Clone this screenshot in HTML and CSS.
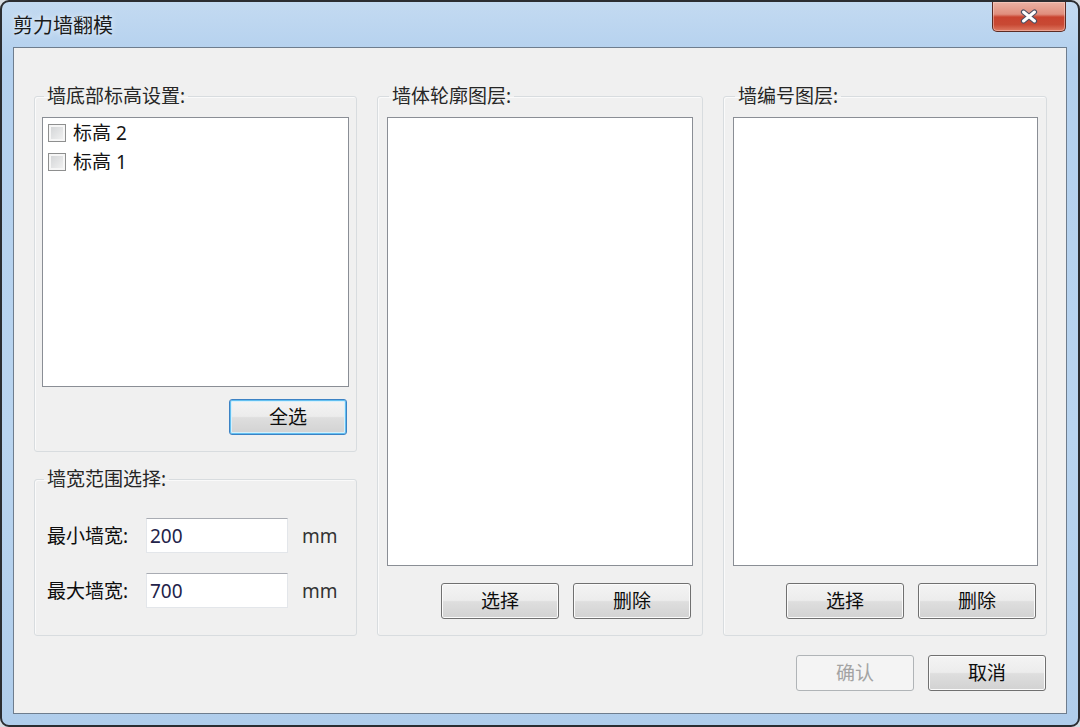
FILE: index.html
```html
<!DOCTYPE html>
<html lang="zh-CN">
<head>
    <meta charset="UTF-8">
    <title>剪力墙翻模</title>
    <link rel="stylesheet" href="styles.css">
</head>
<body>
    <div class="window">
        <div class="titlebar">
            <span class="title">剪力墙翻模</span>
            <button class="close-btn" aria-label="关闭">
                <svg width="18" height="15" viewBox="0 0 18 15">
                    <path d="M3.5 3 L14.5 12 M14.5 3 L3.5 12" stroke="#4b4f63" stroke-width="5.2" stroke-linecap="round" fill="none"/>
                    <path d="M3.5 3 L14.5 12 M14.5 3 L3.5 12" stroke="#ffffff" stroke-width="3" stroke-linecap="round" fill="none"/>
                </svg>
            </button>
        </div>

        <div class="client">
            <div class="panels">
                <div class="col-left">
                    <fieldset class="group group-levels">
                        <legend>墙底部标高设置:</legend>
                        <div class="listbox list-levels">
                            <label class="check-item"><span class="checkbox"></span>标高 2</label>
                            <label class="check-item"><span class="checkbox"></span>标高 1</label>
                        </div>
                        <div class="btn-row">
                            <button class="btn btn-focus">全选</button>
                        </div>
                    </fieldset>

                    <fieldset class="group group-width">
                        <legend>墙宽范围选择:</legend>
                        <div class="field-row">
                            <span class="field-label">最小墙宽:</span>
                            <input class="textbox" type="text" value="200">
                            <span class="unit">mm</span>
                        </div>
                        <div class="field-row">
                            <span class="field-label">最大墙宽:</span>
                            <input class="textbox" type="text" value="700">
                            <span class="unit">mm</span>
                        </div>
                    </fieldset>
                </div>

                <fieldset class="group group-layer group-outline">
                    <legend>墙体轮廓图层:</legend>
                    <div class="listbox list-layer"></div>
                    <div class="btn-row">
                        <button class="btn">选择</button>
                        <button class="btn">删除</button>
                    </div>
                </fieldset>

                <fieldset class="group group-layer group-number">
                    <legend>墙编号图层:</legend>
                    <div class="listbox list-layer"></div>
                    <div class="btn-row">
                        <button class="btn">选择</button>
                        <button class="btn">删除</button>
                    </div>
                </fieldset>
            </div>

            <div class="footer">
                <button class="btn" disabled>确认</button>
                <button class="btn">取消</button>
            </div>
        </div>
    </div>
</body>
</html>
```

FILE: styles.css
```css
:root {
    --frame-blue: #b7d3ee;
    --client-bg: #f0f0f0;
    --text: #141414;
    --ui-font: "Noto Sans", "Noto Sans CJK SC", sans-serif;
}

* {
    margin: 0;
    padding: 0;
    box-sizing: border-box;
}

body {
    width: 1080px;
    height: 727px;
    overflow: hidden;
    background: #d8dde3;
    font-family: var(--ui-font);
    font-size: 19px;
    color: var(--text);
}

.window {
    width: 1080px;
    height: 727px;
    border: 2px solid #2b2d31;
    border-radius: 9px;
    background: linear-gradient(to bottom, #c3daf1, #b3d0ee 8%, #b9d4ef 60%, #b0cdeb);
    display: flex;
    flex-direction: column;
    overflow: hidden;
}

/* title bar */

.titlebar {
    height: 45px;
    flex: none;
    display: flex;
    justify-content: space-between;
    align-items: flex-start;
    padding: 0 12px 0 11px;
}

.title {
    margin-top: 13px;
    font-size: 20px;
    line-height: 22px;
    color: #1a1a1a;
    text-shadow: 0 0 6px rgba(255, 255, 255, 0.9);
}

.close-btn {
    width: 74px;
    height: 30px;
    border: 1px solid #5c2b24;
    border-top: none;
    border-radius: 0 0 5px 5px;
    background: linear-gradient(to bottom, #ebb2a4 0%, #e08e7d 42%, #c9432f 52%, #c84934 78%, #de7a63 100%);
    box-shadow: inset 0 0 0 1px rgba(255, 220, 210, 0.45);
    display: flex;
    align-items: center;
    justify-content: center;
}

/* client area */

.client {
    height: 667px;
    flex: none;
    margin: 0 11px;
    border: 1px solid #6e7d8e;
    background: var(--client-bg);
    padding: 38px 19px 0 20px;
    display: flex;
    flex-direction: column;
}

.panels {
    height: 550px;
    display: flex;
    gap: 20px;
}

.col-left {
    width: 323px;
    display: flex;
    flex-direction: column;
    gap: 17px;
}

.group {
    border: 1px solid #d8dcdf;
    border-radius: 3px;
    box-shadow: inset 1px 1px 0 #fafafa;
    padding: 11px 7px 0 7px;
    min-width: 0;
}

.group legend {
    margin-left: 2px;
    padding: 0 3px;
    line-height: 20px;
    color: #262626;
}

.group-levels {
    height: 366px;
    flex: none;
}

.group-width {
    flex: 1;
    padding: 29px 12px 0 7px;
}

.group-outline {
    width: 326px;
    padding: 11px 9px 0 9px;
}

.group-number {
    flex: 1;
    padding: 11px 8px 0 9px;
}

.listbox {
    background: #ffffff;
    border: 1px solid #8a8e95;
}

.list-levels {
    height: 270px;
    padding: 0 5px;
}

.list-layer {
    height: 449px;
}

.check-item {
    height: 29px;
    display: flex;
    align-items: center;
    gap: 7px;
    line-height: 20px;
}

.checkbox {
    width: 18px;
    height: 18px;
    border: 1px solid #8e8f8f;
    background: linear-gradient(135deg, #d0d2d4, #f4f4f4);
    box-shadow: inset 0 0 0 2px #f6f6f6;
}

.btn-row {
    display: flex;
    justify-content: flex-end;
    gap: 14px;
    padding-right: 2px;
    margin-top: 17px;
}

.group-levels .btn-row {
    margin-top: 12px;
}

/* buttons */

.btn {
    width: 118px;
    height: 36px;
    border: 1px solid #707070;
    border-radius: 3px;
    background: linear-gradient(to bottom, #f4f4f4 0%, #ececec 48%, #dedede 52%, #d2d2d2 100%);
    box-shadow: inset 0 0 0 1px #fbfbfb;
    font-family: var(--ui-font);
    font-size: 19px;
    line-height: 20px;
    color: #0d0d0d;
}

.btn-focus {
    border-color: #3c82c4;
    box-shadow: inset 0 0 0 1px #62bff0, inset 0 0 0 2px #d6effb;
}

.btn:disabled {
    border-color: #b0b4b7;
    background: #f4f4f4;
    box-shadow: none;
    color: #a3a3a3;
}

/* wall width fields */

.field-row {
    display: flex;
    align-items: center;
    height: 35px;
    margin: 0 0 20px 5px;
}

.field-label {
    width: 99px;
    line-height: 20px;
    color: #0d0d0d;
}

.textbox {
    width: 142px;
    height: 35px;
    border: 1px solid #e3e6ea;
    border-top-color: #a9acb3;
    background: #ffffff;
    padding-left: 3px;
    font-family: var(--ui-font);
    font-size: 19px;
    color: #23234a;
    outline: none;
}

.unit {
    margin-left: 14px;
    line-height: 20px;
    color: #333;
}

.footer {
    display: flex;
    justify-content: flex-end;
    gap: 14px;
    margin-top: 19px;
    padding-right: 1px;
}
```
